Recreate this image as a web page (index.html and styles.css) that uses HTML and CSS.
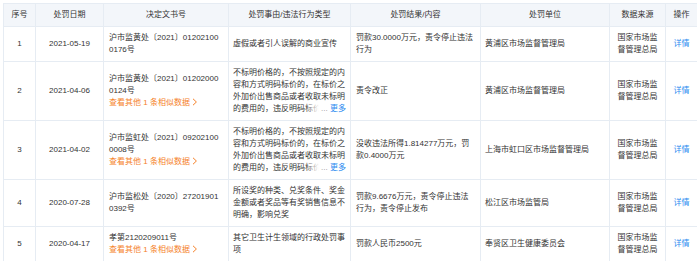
FILE: index.html
```html
<!DOCTYPE html>
<html lang="zh-CN">
<head>
    <meta charset="UTF-8">
    <meta name="viewport" content="width=device-width, initial-scale=1.0">
    <title>行政处罚</title>
    <link rel="stylesheet" href="styles.css">
</head>
<body>

    <table class="penalty-table">
        <colgroup>
            <col class="c-no">
            <col class="c-date">
            <col class="c-doc">
            <col class="c-reason">
            <col class="c-result">
            <col class="c-org">
            <col class="c-src">
            <col class="c-op">
        </colgroup>
        <thead>
            <tr>
                <th>序号</th>
                <th>处罚日期</th>
                <th>决定文书号</th>
                <th>处罚事由/违法行为类型</th>
                <th>处罚结果/内容</th>
                <th>处罚单位</th>
                <th>数据来源</th>
                <th>操作</th>
            </tr>
        </thead>
        <tbody>
            <tr>
                <td class="center">1</td>
                <td class="center">2021-05-19</td>
                <td class="doc">沪市监黄处〔2021〕012021000176号</td>
                <td>虚假或者引人误解的商业宣传</td>
                <td class="result">罚款30.0000万元，责令停止违法行为</td>
                <td>黄浦区市场监督管理局</td>
                <td class="center">国家市场监督管理总局</td>
                <td class="center"><a class="link" href="#">详情</a></td>
            </tr>
            <tr>
                <td class="center">2</td>
                <td class="center">2021-04-06</td>
                <td class="doc">
                    沪市监黄处〔2021〕012020000124号
                    <a class="similar" href="#">查看其他 1 条相似数据<svg width="6" height="8" viewBox="0 0 6 8"><polyline points="1,0.8 4.4,4 1,7.2" fill="none" stroke="#f5822a" stroke-width="1"/></svg></a>
                </td>
                <td>
                    <div class="clamp">不标明价格的，不按照规定的内容和方式明码标价的，在标价之外加价出售商品或者收取未标明的费用的，违反明码标价规定的行为<span class="more"><span class="dots">...</span> <a href="#">更多</a></span></div>
                </td>
                <td class="result">责令改正</td>
                <td>黄浦区市场监督管理局</td>
                <td class="center">国家市场监督管理总局</td>
                <td class="center"><a class="link" href="#">详情</a></td>
            </tr>
            <tr>
                <td class="center">3</td>
                <td class="center">2021-04-02</td>
                <td class="doc">
                    沪市监虹处〔2021〕092021000008号
                    <a class="similar" href="#">查看其他 1 条相似数据<svg width="6" height="8" viewBox="0 0 6 8"><polyline points="1,0.8 4.4,4 1,7.2" fill="none" stroke="#f5822a" stroke-width="1"/></svg></a>
                </td>
                <td>
                    <div class="clamp">不标明价格的，不按照规定的内容和方式明码标价的，在标价之外加价出售商品或者收取未标明的费用的，违反明码标价规定的行为<span class="more"><span class="dots">...</span> <a href="#">更多</a></span></div>
                </td>
                <td class="result">没收违法所得1.814277万元，罚款0.4000万元</td>
                <td>上海市虹口区市场监督管理局</td>
                <td class="center">国家市场监督管理总局</td>
                <td class="center"><a class="link" href="#">详情</a></td>
            </tr>
            <tr>
                <td class="center">4</td>
                <td class="center">2020-07-28</td>
                <td class="doc">沪市监松处〔2020〕272019010392号</td>
                <td>所设奖的种类、兑奖条件、奖金金额或者奖品等有奖销售信息不明确，影响兑奖</td>
                <td class="result">罚款9.6676万元，责令停止违法行为，责令停止发布</td>
                <td>松江区市场监管局</td>
                <td class="center">国家市场监督管理总局</td>
                <td class="center"><a class="link" href="#">详情</a></td>
            </tr>
            <tr>
                <td class="center">5</td>
                <td class="center">2020-04-17</td>
                <td class="doc">
                    孝第2120209011号
                    <a class="similar" href="#">查看其他 1 条相似数据<svg width="6" height="8" viewBox="0 0 6 8"><polyline points="1,0.8 4.4,4 1,7.2" fill="none" stroke="#f5822a" stroke-width="1"/></svg></a>
                </td>
                <td>其它卫生计生领域的行政处罚事项</td>
                <td class="result">罚款人民币2500元</td>
                <td>奉贤区卫生健康委员会</td>
                <td class="center">国家市场监督管理总局</td>
                <td class="center"><a class="link" href="#">详情</a></td>
            </tr>
        </tbody>
    </table>

</body>
</html>
```

FILE: styles.css
```css
body {
    margin: 3px;
    background-color: #fff;
    font-family: "Liberation Sans", "Noto Sans CJK SC", sans-serif;
    font-size: 8px;
    line-height: 12px;
    color: #333;
}
.penalty-table {
    width: 694px;
    border-collapse: collapse;
    table-layout: fixed;
}
.c-no { width: 32px; }
.c-date { width: 68px; }
.c-doc { width: 125px; }
.c-reason { width: 122px; }
.c-result { width: 130px; }
.c-org { width: 129px; }
.c-src { width: 56px; }
.c-op { width: 32px; }
th, td {
    padding: 5px 4px;
    border: 1px solid #e6ecf3;
    vertical-align: middle;
    text-align: left;
    word-break: break-all;
}
th {
    background-color: #f3f6fa;
    font-weight: normal;
    text-align: center;
    color: #333;
}
td.doc {
    padding-left: 5px;
    padding-right: 8px;
}
td.result {
    padding-left: 5px;
    padding-right: 6px;
}
.center {
    text-align: center;
}
a {
    text-decoration: none;
}
.link {
    color: #2d8cf0;
}
.similar {
    display: block;
    color: #f5822a;
}
.similar svg {
    margin-left: 2px;
    vertical-align: -1px;
}
.clamp {
    position: relative;
    max-height: 48px;
    overflow: hidden;
}
.more {
    position: absolute;
    right: 0;
    top: 36px;
    padding-left: 16px;
    background: linear-gradient(to right, rgba(255, 255, 255, 0), #fff 14px);
}
.more .dots {
    color: #999;
}
.more a {
    color: #2d8cf0;
}
```
